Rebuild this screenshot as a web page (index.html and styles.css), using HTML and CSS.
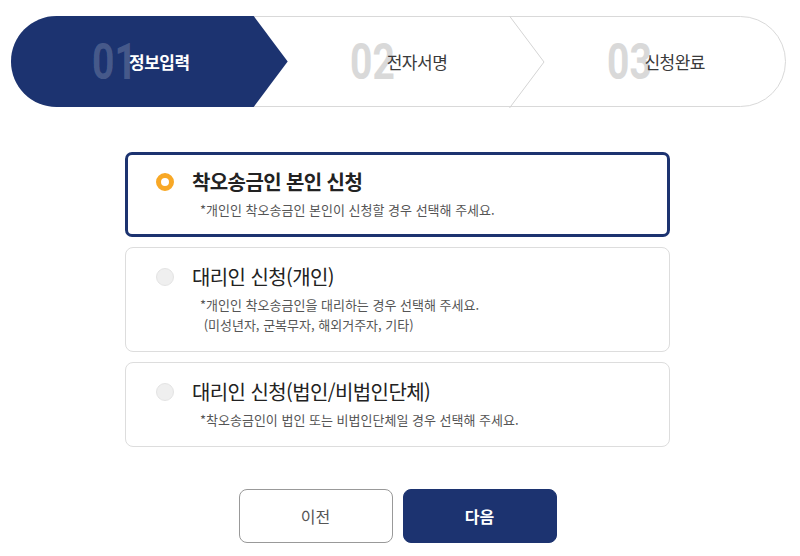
FILE: index.html
```html
<!DOCTYPE html>
<html lang="ko">
<head>
    <meta charset="UTF-8">
    <title>착오송금 반환지원 신청</title>
    <link rel="stylesheet" href="styles.css">
</head>
<body>

<div class="steps">
    <div class="step active">
        <span class="num">01</span><span class="label">정보입력</span>
    </div>
    <div class="step">
        <span class="num">02</span><span class="label">전자서명</span>
        <svg class="chevron" width="36" height="92" viewBox="0 0 36 92">
            <polyline points="0.5,0 35,46 0.5,92" fill="none" stroke="#d4d4d4" stroke-width="1"/>
        </svg>
    </div>
    <div class="step">
        <span class="num">03</span><span class="label">신청완료</span>
    </div>
</div>

<div class="content">
    <div class="option selected">
        <span class="radio"></span>
        <div class="text">
            <p class="title">착오송금인 본인 신청</p>
            <p class="desc">*개인인 착오송금인 본인이 신청할 경우 선택해 주세요.</p>
        </div>
    </div>

    <div class="option">
        <span class="radio"></span>
        <div class="text">
            <p class="title">대리인 신청(개인)</p>
            <p class="desc">*개인인 착오송금인을 대리하는 경우 선택해 주세요.<br>&nbsp;(미성년자, 군복무자, 해외거주자, 기타)</p>
        </div>
    </div>

    <div class="option">
        <span class="radio"></span>
        <div class="text">
            <p class="title">대리인 신청(법인/비법인단체)</p>
            <p class="desc">*착오송금인이 법인 또는 비법인단체일 경우 선택해 주세요.</p>
        </div>
    </div>

    <div class="buttons">
        <button class="btn prev">이전</button>
        <button class="btn next">다음</button>
    </div>
</div>

</body>
</html>
```

FILE: styles.css
```css
* {
    box-sizing: border-box;
}

body {
    margin: 0;
    font-family: "Noto Sans CJK KR", "Noto Sans", sans-serif;
    color: #222;
    background: #fff;
}

/* steps */
.steps {
    display: flex;
    height: 91px;
    margin: 16px 14px 0 11px;
    border: 1px solid #d9d9d9;
    border-radius: 46px;
}

.step {
    flex: 1;
    position: relative;
    display: flex;
    justify-content: center;
    align-items: center;
}

.step.active::before {
    content: "";
    position: absolute;
    top: -1px;
    bottom: -1px;
    left: -1px;
    right: -18px;
    background: #1c3370;
    border-radius: 46px 0 0 46px;
    clip-path: polygon(0 0, calc(100% - 34px) 0, 100% 50%, calc(100% - 34px) 100%, 0 100%);
}

.chevron {
    position: absolute;
    top: -1px;
    right: -18px;
}

.num {
    position: relative;
    display: inline-block;
    width: 45px;
    font-family: Roboto, "Liberation Sans", sans-serif;
    font-size: 50px;
    font-weight: bold;
    line-height: 1;
    color: #d9d9d9;
    transform: scaleX(.78);
    transform-origin: left center;
}

.label {
    position: relative;
    margin-left: -8px;
    font-size: 17px;
    color: #3a3a3a;
    letter-spacing: -0.5px;
}

.active .num {
    color: rgba(255, 255, 255, .2);
}

.active .label {
    color: #fff;
    font-weight: bold;
}

/* options */
.content {
    width: 545px;
    margin: 45px 0 0 125px;
}

.option {
    display: flex;
    align-items: flex-start;
    padding: 16px 30px;
    margin-bottom: 10px;
    border: 1px solid #ddd;
    border-radius: 8px;
}

.option.selected {
    padding: 14px 28px;
    border: 3px solid #1c3370;
    border-radius: 7px;
}

.radio {
    flex-shrink: 0;
    width: 18px;
    height: 18px;
    margin: 4px 18px 0 0;
    border-radius: 50%;
    background: #efefef;
    border: 1px solid #e4e4e4;
}

.selected .radio {
    background: #fff;
    border: 5px solid #f8a826;
}

.title {
    margin: 0;
    font-size: 20px;
    line-height: 26px;
    color: #222;
    letter-spacing: -0.6px;
}

.selected .title {
    font-weight: bold;
}

.desc {
    margin: 5px 0 0 8px;
    font-size: 13px;
    line-height: 20px;
    color: #555;
}

/* buttons */
.buttons {
    display: flex;
    justify-content: center;
    gap: 10px;
    margin-top: 42px;
}

.btn {
    width: 154px;
    height: 54px;
    border-radius: 8px;
    font-family: "Noto Sans CJK KR", sans-serif;
    font-size: 16px;
    cursor: pointer;
}

.prev {
    background: #fff;
    border: 1px solid #999;
    color: #555;
}

.next {
    background: #1c3370;
    border: 1px solid #1c3370;
    color: #fff;
    font-weight: bold;
}
```
